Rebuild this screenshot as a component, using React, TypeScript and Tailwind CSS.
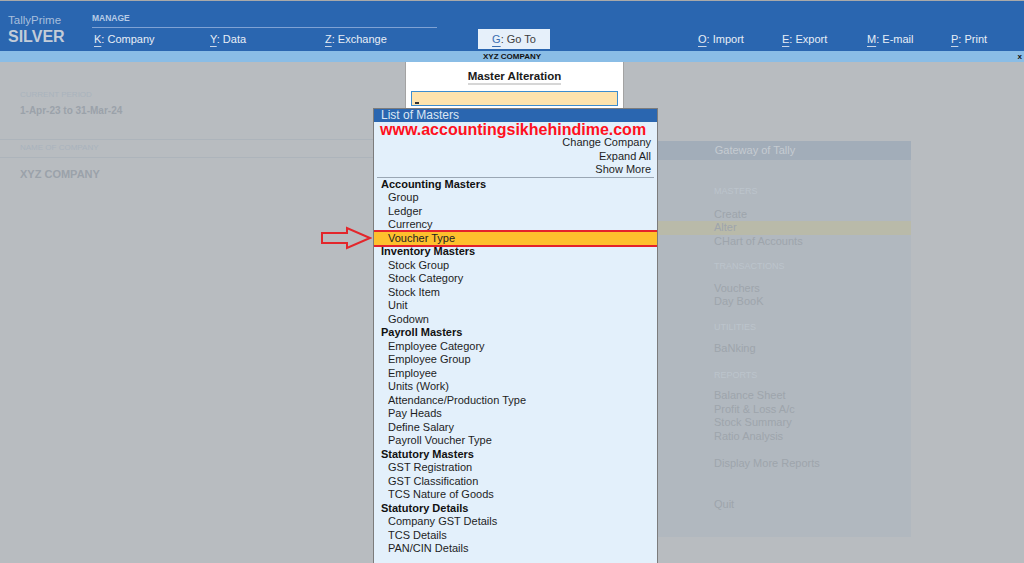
import React from 'react';

// Header menu entries: hotkey, label, width of slot
const leftMenu = [
  { key: 'K', label: 'Company', w: 'w-[116px]' },
  { key: 'Y', label: 'Data', w: 'w-[115px]' },
  { key: 'Z', label: 'Exchange', w: 'w-[153px]' },
];

const rightMenu = [
  { key: 'O', label: 'Import', w: 'w-[84px]' },
  { key: 'E', label: 'Export', w: 'w-[85px]' },
  { key: 'M', label: 'E-mail', w: 'w-[84px]' },
  { key: 'P', label: 'Print', w: 'w-[60px]' },
];

type Row = { text: string; heading?: boolean; active?: boolean };

const masters: Row[] = [
  { text: 'Accounting Masters', heading: true },
  { text: 'Group' },
  { text: 'Ledger' },
  { text: 'Currency' },
  { text: 'Voucher Type', active: true },
  { text: 'Inventory Masters', heading: true },
  { text: 'Stock Group' },
  { text: 'Stock Category' },
  { text: 'Stock Item' },
  { text: 'Unit' },
  { text: 'Godown' },
  { text: 'Payroll Masters', heading: true },
  { text: 'Employee Category' },
  { text: 'Employee Group' },
  { text: 'Employee' },
  { text: 'Units (Work)' },
  { text: 'Attendance/Production Type' },
  { text: 'Pay Heads' },
  { text: 'Define Salary' },
  { text: 'Payroll Voucher Type' },
  { text: 'Statutory Masters', heading: true },
  { text: 'GST Registration' },
  { text: 'GST Classification' },
  { text: 'TCS Nature of Goods' },
  { text: 'Statutory Details', heading: true },
  { text: 'Company GST Details' },
  { text: 'TCS Details' },
  { text: 'PAN/CIN Details' },
];

function MenuItem({ k, label, className }: { k: string; label: string; className?: string }) {
  return (
    <div className={className}>
      <span className="underline underline-offset-[3px] decoration-[#c9d6e8]">{k}</span>: {label}
    </div>
  );
}

function ArrowIcon() {
  return (
    <svg className="absolute left-[320px] top-[226px] w-[52px] h-[24px]" viewBox="0 0 52 24">
      <polygon
        points="2,7 27,7 27,2 50,12 27,22 27,17 2,17"
        fill="none"
        stroke="#e3262b"
        strokeWidth={2}
        strokeLinejoin="miter"
      />
    </svg>
  );
}

function GatewayPanel() {
  const label = 'text-[9px] leading-[13.5px] text-[#bcc4cc] pl-[115px]';
  const item = 'text-[11px] leading-[13.5px] text-[#9ea5ac] pl-[115px]';
  return (
    <div className="w-[312px] mt-[79px] h-[396px] bg-[#b1b8bf]">
      <div className="h-[19px] bg-[#a2adb9] text-[11px] leading-[19px] text-[#c5cbd1] text-center">Gateway of Tally</div>
      <div className="pt-[25px]">
        <div className={label}>MASTERS</div>
        <div className={`${item} mt-[9px]`}>Create</div>
        <div className={`${item} bg-[#b9baa9]`}>Alter</div>
        <div className={item}>CHart of Accounts</div>
        <div className={`${label} mt-[12px]`}>TRANSACTIONS</div>
        <div className={`${item} mt-[8px]`}>Vouchers</div>
        <div className={item}>Day BooK</div>
        <div className={`${label} mt-[12px]`}>UTILITIES</div>
        <div className={`${item} mt-[8px]`}>BaNking</div>
        <div className={`${label} mt-[13px]`}>REPORTS</div>
        <div className={`${item} mt-[7px]`}>Balance Sheet</div>
        <div className={item}>Profit &amp; Loss A/c</div>
        <div className={item}>Stock Summary</div>
        <div className={item}>Ratio Analysis</div>
        <div className={`${item} mt-[14px]`}>Display More Reports</div>
        <div className={`${item} mt-[27px]`}>Quit</div>
      </div>
    </div>
  );
}

export default function App() {
  return (
    <div className="relative w-[1024px] h-[563px] overflow-hidden bg-[#b8bcc0] font-['Liberation_Sans',Arial,sans-serif]">
      {/* Top bar */}
      <div className="h-px bg-[#a9a9a9]" />
      <header className="h-[50px] bg-[#2a66b0] flex">
        <div className="w-[92px] pl-[8px] pt-[12px]">
          <div className="text-[11.5px] leading-[14px] text-[#a8bfdc]">TallyPrime</div>
          <div className="text-[16px] leading-[20px] font-bold text-[#c3ccd8]">SILVER</div>
        </div>
        <div className="flex-1 flex flex-col">
          <div className="pt-[12px] text-[8.5px] leading-[10px] font-bold text-[#b7cbe6]">MANAGE</div>
          <div className="mt-[4px] h-px w-[345px] bg-[#7fa2d4]" />
          <div className="mt-[1px] h-[20px] flex items-center pl-[2px] text-[11px] text-[#e8eef6]">
            {leftMenu.map((m) => (
              <MenuItem key={m.key} k={m.key} label={m.label} className={m.w} />
            ))}
            <div className="w-[72px] h-[20px] bg-[#e6f0fa] flex items-center justify-center text-[#3d3d3d]">
              <span className="underline underline-offset-[3px] text-[#3a6db0]">G</span>: Go To
            </div>
            <div className="w-[148px]" />
            {rightMenu.map((m) => (
              <MenuItem key={m.key} k={m.key} label={m.label} className={m.w} />
            ))}
          </div>
        </div>
      </header>
      <div className="h-[11px] bg-[#8abde6] grid grid-cols-[1fr_auto_1fr] items-center text-[8px] leading-[11px] font-bold text-[#111]">
        <div />
        <div>XYZ COMPANY</div>
        <div className="text-right pr-[2px]">x</div>
      </div>

      {/* Main body */}
      <div className="flex h-[501px]">
        <div className="w-[599px] pt-[28px]">
          <div className="pl-[20px] text-[8px] leading-[10px] text-[#a9b3bd]">CURRENT PERIOD</div>
          <div className="pl-[20px] mt-[5px] text-[10px] leading-[12px] font-bold text-[#9ba2aa]">1-Apr-23 to 31-Mar-24</div>
          <div className="mt-[22px] h-px bg-[#adb4bb]" />
          <div className="pl-[20px] mt-[3px] text-[8px] leading-[10px] text-[#a9b3bd]">NAME OF COMPANY</div>
          <div className="mt-[4px] h-px bg-[#adb4bb]" />
          <div className="pl-[20px] mt-[10px] text-[11px] leading-[13px] font-bold text-[#9ba2aa]">XYZ COMPANY</div>
        </div>
        <GatewayPanel />
      </div>

      {/* Master Alteration dialog */}
      <div className="absolute left-[405px] top-[62px] w-[219px] h-[50px] bg-white border-x border-[#a3a3a3] flex flex-col">
        <div className="pt-[8px] flex justify-center">
          <div className="h-[15px] text-[11.5px] leading-[13px] font-bold text-[#1a1a1a] border-b-2 border-[#d6d6d6]">
            Master Alteration
          </div>
        </div>
        <div className="mx-[5px] mt-[6px] h-[15px] bg-[#fde3ad] border border-[#3b8dd0] flex">
          <div className="ml-[3px] mt-[10px] w-[4px] h-[2px] bg-[#333]" />
        </div>
      </div>

      {/* List of Masters popup */}
      <div className="absolute left-[373px] top-[108px] w-[285px] h-[460px] bg-[#e3f0fb] border border-[#7c7c7c] overflow-hidden">
        <div className="h-[13px] bg-[#2a66b0] pl-[7px] text-[12px] leading-[13px] text-[#dce6f4]">List of Masters</div>
        <div className="h-[14px] pl-[6px] text-[16px] leading-[16px] font-bold text-[#ff1020]">www.accountingsikhehindime.com</div>
        <div className="pr-[6px] text-right text-[11px] leading-[13.5px] text-[#1e1e1e]">
          <div>Change Company</div>
          <div>Expand All</div>
          <div>Show More</div>
        </div>
        <div className="mx-[3px] h-px bg-[#9aa7b4]" />
        {masters.map((r) =>
          r.heading ? (
            <div key={r.text} className="pl-[7px] text-[11px] leading-[13.5px] font-bold text-[#111]">
              {r.text}
            </div>
          ) : (
            <div
              key={r.text}
              className={
                r.active
                  ? 'pl-[14px] text-[11px] leading-[13.5px] text-[#222] bg-[#fec02d] outline-2 outline-solid outline-[#e4222b]'
                  : 'pl-[14px] text-[11px] leading-[13.5px] text-[#1e1e1e]'
              }
            >
              {r.text}
            </div>
          )
        )}
      </div>

      <ArrowIcon />
    </div>
  );
}
